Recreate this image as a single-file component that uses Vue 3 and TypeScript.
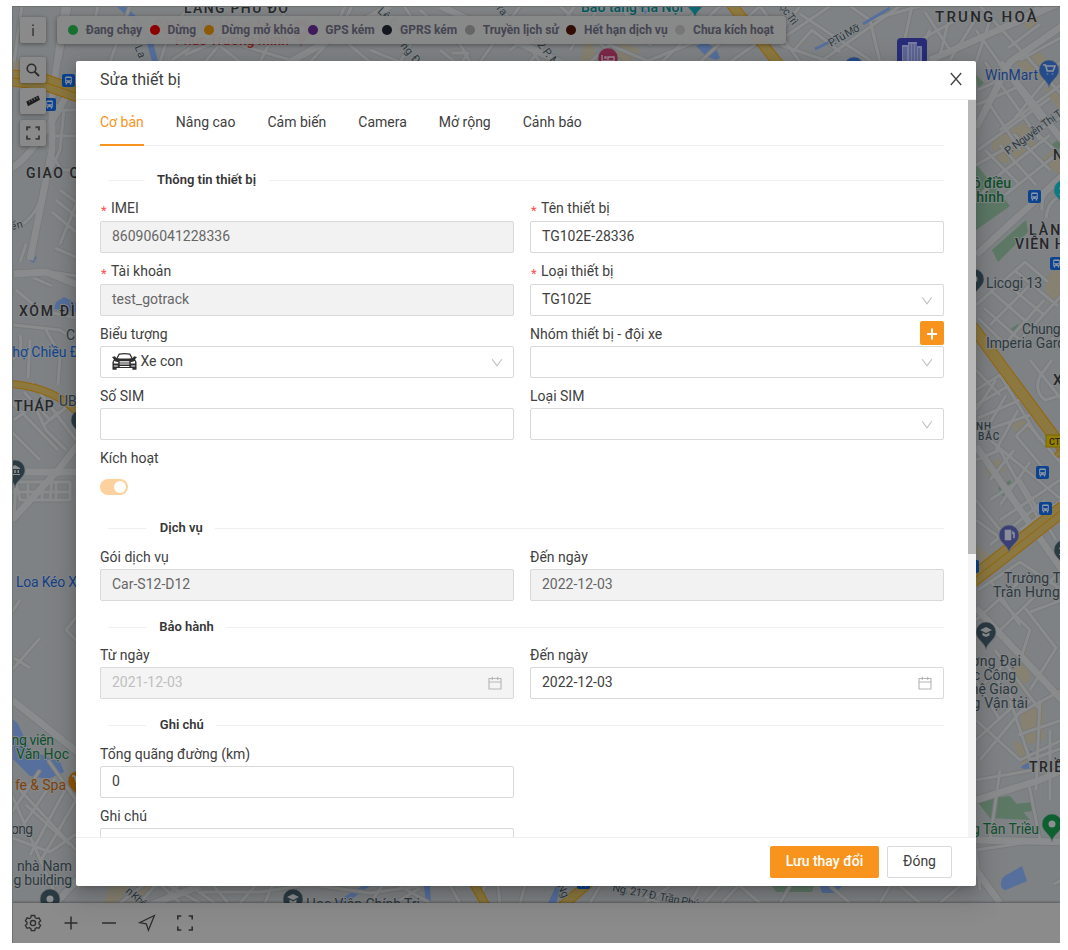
<script setup lang="ts">
interface MapLabel {
  t: string
  x: number
  y: number
  k?: string
  s?: number
  r?: number
  ls?: number
  w?: number
  f?: string
}
interface Field {
  label: string
  value?: string
  required?: boolean
  kind?: 'text' | 'select' | 'date' | 'switch' | 'none'
  state?: 'readonly' | 'disabled'
  icon?: boolean
  add?: boolean
}
interface Section {
  title: string
  loose?: boolean
  fields: Field[]
}

const legend = [
  { label: 'Đang chạy', color: '#17702f' },
  { label: 'Dừng', color: '#8c0000' },
  { label: 'Dừng mở khóa', color: '#8c5a04' },
  { label: 'GPS kém', color: '#3f1a5c' },
  { label: 'GPRS kém', color: '#12181d' },
  { label: 'Truyền lịch sử', color: '#666666' },
  { label: 'Hết hạn dịch vụ', color: '#320d04' },
  { label: 'Chưa kích hoạt', color: '#777777' },
]

const tabs = ['Cơ bản', 'Nâng cao', 'Cảm biến', 'Camera', 'Mở rộng', 'Cảnh báo']

const sections: Section[] = [
  {
    title: 'Thông tin thiết bị',
    fields: [
      { label: 'IMEI', value: '860906041228336', required: true, state: 'readonly' },
      { label: 'Tên thiết bị', value: 'TG102E-28336', required: true },
      { label: 'Tài khoản', value: 'test_gotrack', required: true, state: 'readonly' },
      { label: 'Loại thiết bị', value: 'TG102E', required: true, kind: 'select' },
      { label: 'Biểu tượng', value: 'Xe con', kind: 'select', icon: true },
      { label: 'Nhóm thiết bị - đội xe', kind: 'select', add: true },
      { label: 'Số SIM' },
      { label: 'Loại SIM', kind: 'select' },
      { label: 'Kích hoạt', kind: 'switch' },
    ],
  },
  {
    title: 'Dịch vụ',
    loose: true,
    fields: [
      { label: 'Gói dịch vụ', value: 'Car-S12-D12', state: 'readonly' },
      { label: 'Đến ngày', value: '2022-12-03', state: 'readonly' },
    ],
  },
  {
    title: 'Bảo hành',
    fields: [
      { label: 'Từ ngày', value: '2021-12-03', kind: 'date', state: 'disabled' },
      { label: 'Đến ngày', value: '2022-12-03', kind: 'date' },
    ],
  },
  {
    title: 'Ghi chú',
    loose: true,
    fields: [
      { label: 'Tổng quãng đường (km)', value: '0' },
      { label: '', kind: 'none' },
      { label: 'Ghi chú' },
    ],
  },
]

const wideRoads = [
  'M12 520 L60 468 L80 442', 'M12 472 H90', 'M66 0 L52 98 L52 150 L30 260',
  'M12 168 Q40 150 80 70', 'M14 274 L46 272 L90 290', 'M12 700 L90 762', 'M56 903 L92 864',
  'M290 62 L390 6', 'M440 6 L560 62', 'M976 255 L1062 176', 'M930 60 L1062 2',
  'M976 446 L1062 570', 'M976 128 L1010 62 L1062 26', 'M976 840 L1062 842', 'M976 608 L1062 700',
  'M976 800 L1040 780 L1062 770', 'M1000 62 L1062 140', 'M150 905 L200 886', 'M976 870 L1000 903',
]

const roads = [
  'M14 230 Q40 215 42 190 L60 150', 'M48 150 L62 170 H78', 'M60 190 L80 205', 'M56 200 L78 218', 'M52 212 L76 232',
  'M60 244 L78 200', 'M55 248 L78 258', 'M20 262 L26 244', 'M34 278 L52 286', 'M36 270 L78 276',
  'M16 290 L40 310 L76 318', 'M14 325 L60 330 L76 340', 'M20 335 Q24 350 12 360', 'M30 340 L28 378', 'M46 330 L60 355 L58 385',
  'M12 402 L58 450', 'M14 420 L34 405 L46 430 L66 450', 'M24 392 L50 420 L76 400', 'M12 432 L40 460', 'M32 382 L76 440',
  'M44 425 L58 412', 'M16 482 H70 V500 H20 Z', 'M28 484 V502', 'M42 482 V500', 'M56 482 V500', 'M16 482 L14 520', 'M12 492 H70',
  'M52 478 L50 500', 'M12 612 L20 600', 'M12 670 L40 638', 'M14 658 L30 668', 'M78 615 L66 630 L78 642',
  'M12 795 L60 905', 'M20 790 L76 850', 'M40 770 L12 812', 'M55 778 L20 830', 'M65 790 L30 855', 'M76 800 L40 862', 'M26 805 L70 845',
  'M48 760 L76 800', 'M12 838 L50 852 L76 834', 'M14 62 L22 6', 'M60 60 L70 6', 'M90 40 L98 6',
  'M56 104 L50 140', 'M60 110 H78', 'M50 136 H80', 'M64 110 L60 150',
  'M110 62 L130 6', 'M160 62 L170 30 L190 6', 'M185 55 L215 42 L240 62', 'M205 62 L220 44', 'M190 48 L172 60',
  'M240 45 L290 60', 'M260 62 L288 6', 'M310 62 L340 30 L352 6', 'M320 20 L370 62', 'M345 6 L330 40', 'M370 50 L400 62',
  'M400 62 L420 30 L404 6', 'M420 10 L460 44 L470 62', 'M455 62 L440 50', 'M452 53 H468 L462 62', 'M480 62 L520 6', 'M500 6 L540 62',
  'M510 50 L530 35 L560 30', 'M530 62 L575 6', 'M560 6 L620 62', 'M590 62 L610 45 L650 62', 'M600 6 L570 50', 'M620 6 L650 45 L700 10',
  'M645 62 L700 40', 'M662 62 L720 6', 'M700 62 L760 6', 'M730 62 L790 20', 'M760 6 L800 62', 'M800 6 L782 30',
  'M780 45 L830 62', 'M786 36 L830 6', 'M794 50 L812 30 L840 52', 'M800 14 L870 60', 'M820 62 L900 6', 'M870 20 L880 62', 'M850 6 L870 20 L920 6',
  'M912 6 L905 38', 'M930 30 L915 62', 'M925 12 L950 50', 'M940 55 L950 15', 'M950 60 L975 20', 'M920 40 L975 10',
  'M976 30 L1040 120', 'M980 6 L1062 95', 'M990 20 L976 62', 'M1000 30 L1040 6', 'M1008 48 L1040 24', 'M1020 60 L1060 38',
  'M978 90 L1008 76', 'M976 105 L1020 86', 'M985 62 L1040 140', 'M1000 130 L1062 84', 'M978 150 L1050 98', 'M1020 150 L990 105',
  'M1015 118 L1062 60', 'M976 165 L1060 118', 'M985 150 L1020 185', 'M1000 145 L1036 185', 'M1014 134 L1050 170', 'M1028 125 L1060 155',
  'M990 182 L1050 135', 'M1005 195 L1062 150', 'M976 200 L1000 175', 'M1042 210 Q1040 190 1062 185', 'M1046 218 Q1048 200 1062 196',
  'M976 305 L1025 262 L1048 282', 'M990 290 L1030 325', 'M1002 280 L1044 315', 'M1014 270 L1058 306', 'M984 308 L1020 340', 'M978 318 L1006 345',
  'M1020 340 L1062 295', 'M1004 345 L1044 300', 'M990 325 L1030 285', 'M1040 350 L1062 330', 'M1030 360 L1062 400', 'M1042 372 Q1032 390 1045 400 L1062 395',
  'M1052 360 L1040 376', 'M976 370 L1000 395', 'M976 390 L1000 375 L1040 440', 'M976 405 L1010 385', 'M978 418 L1020 400', 'M980 432 L1030 415',
  'M996 380 L976 410', 'M1006 395 L986 430', 'M1018 410 L996 450', 'M1016 436 L1028 424 L1060 462', 'M1016 436 L1050 476', 'M976 460 L1000 450 L1045 530',
  'M990 500 L1020 480 L1056 540', 'M990 545 L1045 500', 'M1000 520 L1060 480', 'M990 440 L1062 500', 'M1014 450 L990 480', 'M1030 462 L1000 505',
  'M976 520 L1010 545', 'M976 500 L1000 530', 'M1020 530 L1062 500', 'M978 590 L1020 562 L1062 590', 'M976 620 L1030 572', 'M990 640 L1062 570',
  'M1000 600 L1030 630 L1022 655', 'M1025 608 L1056 648 L1030 690', 'M990 580 L1020 625', 'M1030 612 L1062 600', 'M1010 660 L976 690',
  'M980 660 L1014 700', 'M995 650 L1040 710', 'M976 680 L1000 720', 'M1010 700 L1030 760', 'M1016 715 L1062 690', 'M1018 735 L1062 720',
  'M976 740 L1020 700', 'M980 760 L1030 700', 'M976 720 L1020 760 L1062 740', 'M1030 760 L1062 748', 'M1040 700 L1036 790', 'M1050 730 L1050 800',
  'M976 780 L1062 765', 'M1000 770 L990 840', 'M1028 780 L1040 840', 'M976 850 L1030 842', 'M980 890 L976 850', 'M1062 880 L1054 884',
  'M120 903 L150 880', 'M140 903 L160 880', 'M160 903 L180 884', 'M180 903 L160 884', 'M200 903 L170 886', 'M215 903 L190 886',
  'M228 903 L214 886', 'M200 892 H260 L300 886', 'M240 903 L255 886', 'M265 903 L272 886', 'M320 886 L370 893 L420 886', 'M370 903 L382 886',
  'M395 903 L420 888', 'M400 886 L430 903', 'M450 886 L460 903', 'M478 903 L485 886', 'M500 903 L498 886', 'M520 903 L525 886',
  'M590 903 L600 886', 'M620 886 L660 903', 'M645 903 L670 886', 'M690 903 L700 886', 'M705 903 L720 886', 'M722 903 L738 886', 'M740 886 L760 903',
  'M780 903 L790 886', 'M850 903 L830 886', 'M880 903 L890 886', 'M920 903 L900 886', 'M940 903 L960 886',
]

const highways = [
  { d: 'M12 78 L44 82 L90 98', w: 15 },
  { d: 'M12 384 Q56 388 80 415', w: 6 },
  { d: 'M972 326 L1064 450', w: 10 },
  { d: 'M972 580 L1064 508', w: 14 },
  { d: 'M728 0 L780 66', w: 9 },
  { d: 'M474 884 L486 906', w: 7 },
  { d: 'M560 908 L590 882', w: 8 },
  { d: 'M1056 456 L1064 448', w: 4 },
]

const water = [
  'M125 6 L138 18 L152 38 L158 61 L152 61 L146 40 L134 22 L116 6 Z',
  'M56 302 L64 297 L76 303 V312 L54 309 Z', 'M32 255 L37 257 L34 263 L30 261 Z',
  'M12 718 L18 724 L30 750 L60 762 L64 772 L48 779 L30 776 L12 758 Z',
  'M704 42 L716 48 L720 58 L716 60 L706 56 L696 46 Z',
  'M1001 882 Q1002 876 1010 873 L1022 866 L1027 881 L1006 890 Q1000 889 1001 882 Z', 'M1022 766 L1029 762 L1029 770 L1021 768 Z', 'M1030 751 h2 v4 h-2 Z',
  'M334 903 L362 886 H370 L346 903 Z', 'M424 886 H430 L431 903 H426 Z', 'M548 903 L556 886 H562 L556 903 Z', 'M820 886 H842 L836 893 H822 Z',
]
const parks = [
  'M976 164 L1010 206 L976 230 Z', 'M992 250 L1026 220 L1028 232 L998 262 Z', 'M976 75 L984 83 L978 88 Z',
  'M998 488 L1010 480 L1014 488 L1003 496 Z', 'M976 800 L1010 796 L1030 820 L990 818 Z', 'M1016 804 L1032 802 V811 L1017 813 Z',
  'M772 886 H814 L812 892 H776 Z', 'M1052 144 L1060 139 V160 L1054 152 Z', 'M1009 330 L1018 324 L1020 328 L1012 333 Z',
]
const blocks = [
  'M1012 60 L1030 45 L1056 66 L1040 82 Z', 'M1016 12 L1040 18 L1030 34 Z', 'M1044 90 L1060 82 V110 Z', 'M990 140 L1030 120 L1036 150 L1000 165 Z',
  'M1040 160 L1060 146 V176 Z', 'M1044 280 L1060 265 V295 L1048 303 Z', 'M1012 650 L1026 650 L1030 680 L1016 690 Z', 'M1020 705 L1044 700 L1044 740 L1022 745 Z',
  'M1012 740 L1030 748 L1024 770 Z', 'M110 886 H130 L118 903 H104 Z', 'M140 886 H152 L140 903 H130 Z', 'M588 30 L598 62 H580 Z', 'M620 40 L640 50 L630 62 H614 Z',
  'M976 545 L990 556 L980 572 Z', 'M1012 425 L1024 418 L1030 428 L1018 436 Z', 'M984 470 L998 458 L1006 470 L992 478 Z', 'M12 60 H22 V76 H12 Z',
  'M1030 515 L1050 500 L1056 510 L1036 525 Z',
]

const buses = [
  { x: 62, y: 74 }, { x: 43, y: 98 }, { x: 1028, y: 190 }, { x: 1050, y: 257 }, { x: 1036, y: 466 }, { x: 1039, y: 502 }, { x: 966, y: 560 }, { x: 577, y: 876 },
]

const pins = [
  { x: 1049, y: 70, c: '#254b88', g: 'cart' }, { x: 1009, y: 535, c: '#3b4176', g: 'pump' },
  { x: 986, y: 632, c: '#2b3b44', g: 'cap' }, { x: 1052, y: 824, c: '#0d6030', g: 'dot' },
  { x: 974, y: 279, c: '#2b3b44', g: 'dot' }, { x: 15, y: 470, c: '#2b3b44', g: 'bank' },
  { x: 81, y: 420, c: '#2b3b44', g: 'dot' }, { x: 78, y: 781, c: '#8e5607', g: 'cart' },
  { x: 50, y: 899, c: '#2b3b44', g: 'dot' }, { x: 293, y: 899, c: '#2b3b44', g: 'cap' },
  { x: 1064, y: 190, c: '#087b85', g: 'bank' }, { x: 1064, y: 550, c: '#2b3b44', g: 'bank' },
  { x: 854, y: 67, c: '#254b88', g: 'dot' }, { x: 608, y: 58, c: '#7d2748', g: 'bed' },
  { x: 695, y: 0, c: '#0b6870', g: 'dot' }, { x: 301, y: 29, c: '#814445', g: 'dot' },
]

const labels: MapLabel[] = [
  { t: 'LÀNG PHÚ ĐÔ', x: 184, y: 13, w: 105, k: 'area' },
  { t: 'Bệnh viện Hồng Ngọc', x: 154, y: 31, w: 136, f: '#8d3734' },
  { t: 'Phúc Trường Minh', x: 175, y: 45, w: 114, f: '#8a1f1c', k: 'mid' },
  { t: 'Bảo tàng Hà Nội', x: 581, y: 12, w: 102, f: '#03565c', k: 'mid' },
  { t: 'TRUNG HOÀ', x: 935, y: 22, w: 103, k: 'area', s: 15 },
  { t: 'WinMart', x: 985, y: 80, w: 53, f: '#173e7e' },
  { t: 'Vincom Center', x: 880, y: 70, w: 82, f: '#173e7e', k: 'mid', s: 13 },
  { t: 'P.Tú Mỡ', x: 831, y: 47, w: 34, r: -30, k: 'road' },
  { t: 'ọc Trì', x: 779, y: 7, w: 23, r: 54, k: 'road' },
  { t: 'P. Nguyễn Thị T', x: 1008, y: 155, w: 68, r: -36, k: 'road' },
  { t: 'Tố La', x: 128, y: 31, w: 30, r: 68, k: 'road' },
  { t: 'Lê Đức', x: 377, y: 12, w: 36, r: 42, k: 'road' },
  { t: 'ng Đ', x: 400, y: 46, w: 24, r: 50, k: 'road' },
  { t: '62 P. M', x: 533, y: 40, w: 35, r: 52, k: 'road' },
  { t: 'Tra', x: 492, y: 4, w: 16, r: 50, k: 'road' },
  { t: 'GIAO QUANG', x: 26, y: 178, w: 98, k: 'area' },
  { t: 'uyến', x: 0, y: 233, w: 24, r: -14, k: 'road' },
  { t: 'XÓM ĐÌNH', x: 19, y: 316, w: 80, k: 'area' },
  { t: 'Chợ', x: 66, y: 340 }, { t: 'chợ Chiều Đình', x: 5, y: 357, w: 93, f: '#0f458d' },
  { t: 'THÁP', x: 14, y: 411, w: 41, k: 'area' }, { t: 'UBND', x: 59, y: 406 },
  { t: 'Loa Kéo X', x: 16, y: 587, w: 61, f: '#143f86' },
  { t: 'Công viên', x: -5, y: 745, w: 59, f: '#0d502a' },
  { t: 'Văn Học', x: 16, y: 759, w: 53, f: '#0d502a' },
  { t: 'fe & Spa', x: 15, y: 790, w: 51, f: '#7e4209' },
  { t: 'ương', x: 3, y: 834, w: 30 }, { t: 'nhà Nam', x: 17, y: 871, w: 55 }, { t: 'ng building', x: 6, y: 885, w: 66 },
  { t: 'hồ điều', x: 965, y: 188, w: 46, f: '#0d502a', k: 'mid' },
  { t: 'Chính', x: 967, y: 202, w: 37, f: '#0d502a', k: 'mid' },
  { t: 'N', x: 1053, y: 160, k: 'area' }, { t: 'LÀNG', x: 1029, y: 235, w: 44, k: 'area' },
  { t: 'VIÊN HÒA', x: 1015, y: 249, w: 72, k: 'area' }, { t: 'Licogi 13', x: 986, y: 288, w: 56 },
  { t: 'Chung cư', x: 1022, y: 334, w: 57 }, { t: 'Imperia Garden', x: 986, y: 348, w: 94 },
  { t: 'X', x: 1053, y: 385, k: 'area', s: 15 }, { t: 'NH', x: 976, y: 430, s: 10, ls: 1, k: 'mid' }, { t: 'BẮC', x: 978, y: 440, s: 10, ls: 1, k: 'mid' },
  { t: 'Trường TH', x: 1004, y: 583, w: 67 }, { t: 'Trần Hưng Đ', x: 993, y: 597, w: 80 },
  { t: 'Trường Đại', x: 949, y: 666, w: 72 }, { t: 'học Công', x: 957, y: 680, w: 59 },
  { t: 'nghệ Giao', x: 955, y: 694, w: 63 }, { t: 'thông Vận tải', x: 944, y: 708, w: 84 },
  { t: 'TRIỀU', x: 1029, y: 772, w: 45, k: 'area' }, { t: 'g Tân Triều', x: 972, y: 834, w: 67, f: '#0d502a' },
  { t: 'n Khê', x: 125, y: 892, w: 24, r: 42, k: 'road' }, { t: 'Học Viện Chính Trị', x: 306, y: 909, w: 114 },
  { t: 'Ng. 217 Đ. Trần Phú', x: 612, y: 891, w: 88, r: 11, k: 'road' }, { t: 'Ng', x: 557, y: 886, r: 65, k: 'road' },
]
</script>

<template>
  <div class="screen">
    <svg class="map" viewBox="12 6 1048 897" width="1048" height="897">
      <defs>
        <symbol id="bus" viewBox="0 0 13 13">
          <rect width="13" height="13" rx="2" fill="#0c4391" />
          <path d="M3.2 3.6Q3.2 2.6 4.2 2.6H8.8Q9.8 2.6 9.8 3.6V9H3.2ZM3.8 9h1.4v1.4H3.8ZM7.8 9h1.4v1.4H7.8Z" fill="#8f9aa9" />
          <path d="M4.2 4H8.8V6.2H4.2ZM4.2 7.3h1.1v.9H4.2ZM7.7 7.3h1.1v.9H7.7Z" fill="#0c4391" />
        </symbol>
      </defs>
      <rect x="12" y="6" width="1048" height="897" fill="#7f8284" />
      <path v-for="d in blocks" :key="d" :d="d" fill="#868171" />
      <path v-for="d in parks" :key="d" :d="d" fill="#5d7966" />
      <path v-for="d in water" :key="d" :d="d" fill="#566f9d" />
      <g class="casing">
        <path v-for="d in roads" :key="d" :d="d" />
        <path v-for="d in wideRoads" :key="d" :d="d" class="wide" />
      </g>
      <g class="street">
        <path v-for="d in roads" :key="d" :d="d" />
        <path v-for="d in wideRoads" :key="d" :d="d" class="wide" />
      </g>
      <g v-for="h in highways" :key="h.d" fill="none">
        <path :d="h.d" stroke="#94650b" :stroke-width="h.w + 2" />
        <path :d="h.d" stroke="#8d793f" :stroke-width="h.w" />
        <path v-if="h.w > 12" :d="h.d" stroke="#94650b" stroke-width="1" />
      </g>
      <path d="M815 49 L840 37 M863 24 L890 8 M640 7 L646 13" stroke="#566f9d" stroke-width="3" />
      <g>
        <rect x="897" y="38" width="30" height="40" rx="4" fill="#292d78" />
        <path d="M902 61V45h6v16ZM908 61V42h9v19ZM917 61V46h5v15Z" fill="#777da2" />
        <path d="M904 47v14M906 47v14M910 44v17M913 44v17M916 44v17M919 48v13" stroke="#3a3f7c" stroke-width=".8" />
      </g>
      <rect x="1046" y="435" width="20" height="12" fill="#938000" stroke="#766600" />
      <text x="1049" y="444.500" class="shield">CT20</text>
      <use v-for="b in buses" :key="`${b.x}-${b.y}`" href="#bus" :x="b.x" :y="b.y" width="13" height="13" />
      <g v-for="p in pins" :key="`${p.x}-${p.y}`" :transform="`translate(${p.x} ${p.y})`">
        <path d="M0 18C-1 10 -10 8 -10 0A10 10 0 0 1 10 0C10 8 1 10 0 18Z" :fill="p.c" stroke="#737679" stroke-width=".6" />
        <circle v-if="p.g === 'dot'" r="3.500" fill="#8c8e8f" />
        <path v-else-if="p.g === 'cart'" d="M-6 -5h2.500l1.800 6H4L6 -4H-3M-1.500 3.500v1M3.500 3.500v1" fill="none" stroke="#8c939d" stroke-width="1.600" />
        <path v-else-if="p.g === 'cap'" d="M-6 -2L0 -5L6 -2L0 1ZM-3.500 .5V3.500L0 5L3.500 3.500V.5L0 2.500Z" fill="#8c8e8f" />
        <path v-else-if="p.g === 'pump'" d="M-4 5V-5H2V5ZM3 -1h1.500v4h1V-2L3.500 -4" fill="#8c8e9c" stroke="#8c8e9c" stroke-width=".6" />
        <path v-else-if="p.g === 'bank'" d="M-5 -2L0 -5L5 -2V-1H-5ZM-4 0h1.500v3H-4ZM-.8 0H.8v3H-.8ZM2.500 0H4v3H2.500ZM-5 4H5v1H-5Z" fill="#8c8e8f" />
        <path v-else d="M-6 -3V5M-6 3H6V-1H0V2M-3 -1h1v1h-1Z" fill="none" stroke="#9a8790" stroke-width="1.400" />
      </g>
      <text
        v-for="l in labels"
        :key="`${l.t}-${l.x}-${l.y}`"
        :x="l.x"
        :y="l.y"
        :class="['label', l.k]"
        :fill="l.f ?? (l.k === 'area' ? '#252729' : '#2e3a40')"
        :font-size="l.s ?? (l.k === 'road' ? 11 : 14)"
        :letter-spacing="l.ls ?? (l.k === 'area' ? 1.2 : 0)"
        :textLength="l.w"
        :transform="l.r ? `rotate(${l.r} ${l.x} ${l.y})` : undefined"
      >{{ l.t }}</text>
    </svg>

    <div class="tools">
      <button class="tool info" aria-label="Thông tin">
        <svg width="26" height="26" viewBox="0 0 26 26"><path d="M12.300 7.500h1.500v1.600h-1.500zM12.400 11h1.300v8h-1.300z" fill="#2c2c2c" /></svg>
      </button>
      <button class="tool search" aria-label="Tìm kiếm">
        <svg width="26" height="26" viewBox="0 0 26 26"><circle cx="11.500" cy="11.500" r="4.300" /><path d="M14.600 14.600L19 19" stroke-width="2" /></svg>
      </button>
      <button class="tool ruler" aria-label="Đo">
        <svg width="26" height="26" viewBox="0 0 26 26">
          <path d="M6.300 13.400L18.300 7.600L20 11.800L8 18.200Z" fill="#1c1c1c" stroke="none" />
          <path d="M9 12.500l.9 2M11.500 11.300l.9 2M14 10l.9 2M16.500 8.800l.9 2" stroke="#777" stroke-width=".9" />
        </svg>
      </button>
      <button class="tool full" aria-label="Toàn màn hình">
        <svg width="26" height="26" viewBox="0 0 26 26"><path d="M7 10.500V7.300H10.500M15.500 7.300H19V10.500M19 15.500V18.900H15.500M10.500 18.900H7V15.500" stroke-width="1.900" stroke="#3d3d3d" /></svg>
      </button>
    </div>

    <div class="legend">
      <template v-for="item in legend" :key="item.label">
        <i :style="{ background: item.color }"></i><span>{{ item.label }}</span>
      </template>
    </div>

    <footer class="dock">
      <svg viewBox="0 0 18 18">
        <path d="M7.300 1.500H10.700L11.200 3.700L12.700 4.600L14.900 3.900L16.600 6.900L15 8.400V9.900L16.600 11.400L14.900 14.300L12.700 13.600L11.200 14.500L10.700 16.700H7.300L6.800 14.500L5.300 13.600L3.100 14.300L1.400 11.400L3 9.900V8.400L1.400 6.900L3.100 3.900L5.300 4.600L6.800 3.700Z" />
        <circle cx="9" cy="9.100" r="2.600" />
      </svg>
      <svg viewBox="0 0 18 18"><path d="M9 2.500V15.500M2.500 9H15.500" stroke-width="1.500" /></svg>
      <svg viewBox="0 0 18 18"><path d="M2 9H16" stroke-width="1.500" /></svg>
      <svg viewBox="0 0 18 18"><path d="M16.400 1.500L10.400 16.200L8.300 9.800L1.600 8.600Z" /></svg>
      <svg viewBox="0 0 18 18"><path d="M1.800 5.500V2H5.300M12.700 2H16.200V5.500M16.200 12.500V16H12.700M5.300 16H1.800V12.500" stroke-width="1.600" /></svg>
    </footer>

    <div class="overlay">
      <section class="dialog">
        <header class="dialog-head">
          <h1>Sửa thiết bị</h1>
          <svg width="12" height="14" viewBox="0 0 12 14"><path d="M.8 1L11.200 13M11.200 1L.8 13" stroke="#444" stroke-width="1.300" /></svg>
        </header>
        <div class="dialog-body">
          <div class="content">
            <nav class="tabs">
              <a v-for="(tab, i) in tabs" :key="tab" :class="{ active: i === 0 }">{{ tab }}</a>
            </nav>
            <div v-for="section in sections" :key="section.title">
              <h2 class="divider" :class="{ loose: section.loose }"><span>{{ section.title }}</span></h2>
              <div class="grid">
                <div v-for="(field, i) in section.fields" :key="i" class="field" :class="{ required: field.required }">
                  <template v-if="field.kind !== 'none'">
                    <label><b v-if="field.required">*</b>{{ field.label }}</label>
                    <button v-if="field.add" class="add" aria-label="Thêm">
                      <svg width="10" height="12" viewBox="0 0 10 12"><path d="M5 .5V11.500M0 6H10" stroke="#fff" stroke-width="2" /></svg>
                    </button>
                    <div v-if="field.kind === 'switch'" class="switch"></div>
                    <div v-else class="input" :class="field.state">
                      <svg v-if="field.icon" class="car" width="25" height="18" viewBox="0 0 26 18" preserveAspectRatio="none">
                        <path d="M5 5.500L7.500 1.200Q13 .2 18.500 1.200L21 5.500" fill="none" stroke="#2f2f2f" stroke-width="1.300" />
                        <path d="M0 4L3 3.300L4.500 5L8.500 5.500H17.500L21.500 5L23 3.300L26 4L24 6.200L25.500 9V16.800H21.200V15H4.800V16.800H.5V9L2 6.200Z" fill="#2f2f2f" />
                        <path d="M2 8L6.500 9.300V10.500H2ZM24 8L19.500 9.300V10.500H24ZM8 8.200H18V9.400H8ZM8 10.600H18V11.600H8ZM2 12.500H6V13.600H2ZM20 12.500H24V13.600H20ZM8 13H18V13.900H8Z" fill="#fff" />
                      </svg>
                      <span>{{ field.value }}</span>
                      <svg v-if="field.kind === 'select'" class="arrow" width="12" height="10" viewBox="0 0 12 10"><path d="M1.200 1.200L6 7.800L10.800 1.200" /></svg>
                      <svg v-if="field.kind === 'date'" class="arrow date" width="14" height="14" viewBox="0 0 14 14"><path d="M1 2.500H13V13H1ZM1 6H13M4.300 .7V4M9.700 .7V4" /></svg>
                    </div>
                  </template>
                </div>
              </div>
            </div>
          </div>
          <div class="scrollbar"><div class="thumb"></div></div>
        </div>
        <footer class="dialog-foot">
          <button class="btn primary">Lưu thay đổi</button>
          <button class="btn">Đóng</button>
        </footer>
      </section>
    </div>
  </div>
</template>

<style>
body {
  background: #fff;
}
</style>

<style scoped>
* {
  box-sizing: border-box;
}
.screen {
  position: relative;
  width: 1048px;
  height: 937px;
  margin: 6px 0 0 12px;
  overflow: hidden;
  display: flex;
  flex-direction: column;
  background: #8b8b8b;
  font-family: Roboto, 'Liberation Sans', sans-serif;
  font-size: 14px;
  color: #404040;
}
.screen::after {
  content: '';
  position: absolute;
  inset: 0;
  border-top: 1px solid #6f7171;
  border-left: 1px solid #6f7171;
  pointer-events: none;
}
button {
  font: inherit;
  padding: 0;
}
.map {
  display: block;
  flex: none;
}
.casing path,
.street path {
  fill: none;
  stroke-linejoin: round;
}
.casing path {
  stroke: #777a7b;
  stroke-width: 4.800;
}
.street path {
  stroke: #898b8c;
  stroke-width: 3;
}
.casing .wide {
  stroke-width: 8.500;
}
.street .wide {
  stroke-width: 6.800;
}
.label {
  paint-order: stroke;
  stroke: #85878a;
  stroke-width: 2px;
  stroke-linejoin: round;
}
.area,
.mid {
  font-weight: 500;
}
.shield {
  font-size: 9px;
  font-weight: 500;
  fill: #2a2700;
}
.tools {
  position: absolute;
  left: 8px;
  top: 11px;
  display: flex;
  flex-direction: column;
}
.tool {
  width: 26px;
  height: 26px;
  border: 0;
  border-radius: 2px;
  background: #8a8a8a;
  box-shadow: 0 1px 4px rgba(0, 0, 0, 0.4);
}
.tool svg {
  display: block;
  fill: none;
  stroke: #2c2c2c;
  stroke-width: 1.600;
}
.info svg {
  stroke: none;
}
.search {
  margin-top: 14px;
}
.ruler {
  margin-top: 5px;
}
.full {
  margin-top: 6px;
}
.legend {
  position: absolute;
  left: 45px;
  top: 10px;
  width: 729px;
  height: 28px;
  padding: 0 12px 1px 11px;
  display: flex;
  align-items: center;
  justify-content: space-between;
  white-space: nowrap;
  border-radius: 4px;
  background: rgba(137, 137, 137, 0.94);
  box-shadow: 0 1px 5px rgba(0, 0, 0, 0.4);
  font-size: 12px;
  font-weight: 700;
  color: #454552;
}
.legend i {
  width: 10px;
  height: 10px;
  flex: none;
  margin-top: 1px;
  border-radius: 50%;
}
.dock {
  position: relative;
  height: 40px;
  flex: none;
  padding: 0 12px;
  display: flex;
  align-items: center;
  gap: 20px;
  background: #8b8b8b;
  box-shadow: 0 -1px 2px rgba(0, 0, 0, 0.3);
}
.dock svg {
  width: 18px;
  height: 18px;
  fill: none;
  stroke: #2e2e2e;
  stroke-width: 1.300;
}
.overlay {
  position: absolute;
  inset: 0;
  padding-top: 55px;
  display: flex;
  justify-content: center;
  align-items: flex-start;
  padding-right: 20px;
}
.dialog {
  width: 900px;
  height: 825px;
  display: flex;
  flex-direction: column;
  background: #fff;
  border-radius: 2px;
  box-shadow: 0 3px 6px -4px rgba(0, 0, 0, 0.3), 0 6px 16px rgba(0, 0, 0, 0.16), 0 9px 28px 8px rgba(0, 0, 0, 0.1);
}
.dialog-head {
  height: 39px;
  flex: none;
  padding: 0 14px 2px 24px;
  display: flex;
  align-items: center;
  justify-content: space-between;
  border-bottom: 1px solid #efefef;
}
h1 {
  margin: 2px 0 0;
  font-size: 16px;
  line-height: 22px;
  font-weight: 400;
  color: #404040;
}
.dialog-body {
  height: 737px;
  display: flex;
  overflow: hidden;
}
.content {
  flex: 1;
  padding: 0 24px;
}
.scrollbar {
  width: 8px;
  background: #f4f4f4;
}
.thumb {
  height: 454px;
  background: #b7b7b7;
}
.tabs {
  height: 46px;
  display: flex;
  gap: 32px;
  border-bottom: 1px solid #efefef;
  margin-bottom: 24px;
}
.tabs a {
  height: 46px;
  line-height: 22px;
  padding-top: 11px;
}
.tabs .active {
  color: #f8941d;
  border-bottom: 2px solid #f8941d;
}
.divider {
  display: flex;
  align-items: center;
  height: 20px;
  margin: 16px 0 7px 8px;
  font-size: 13px;
  font-weight: 600;
  line-height: 20px;
  white-space: nowrap;
  color: #363636;
}
.divider::before,
.divider::after {
  content: '';
  width: 5%;
  height: 1px;
  margin-top: 1px;
  background: #f0f0f0;
}
.divider::after {
  width: 95%;
}
.divider span {
  flex: none;
  padding: 0 12.500px 0 13.500px;
}
.divider.loose {
  margin-bottom: 8px;
}
.grid {
  display: grid;
  grid-template-columns: 1fr 1fr;
  gap: 7px 16px;
}
.field {
  position: relative;
}
.field label {
  display: block;
  height: 23px;
  line-height: 22px;
}
.required label {
  height: 24px;
}
.field b {
  display: inline-block;
  width: 11px;
  height: 14px;
  line-height: 18px;
  font-size: 13px;
  color: #ff4d4f;
  font-weight: 400;
  padding-left: 1px;
  vertical-align: -2px;
}
.input {
  height: 32px;
  border: 1px solid #d9d9d9;
  border-radius: 2px;
  padding: 0 11px 2px;
  display: flex;
  align-items: center;
  color: #404040;
}
.input.readonly {
  background: #f2f2f2;
  color: #666;
}
.input.disabled {
  background: #f4f4f4;
  color: #bfbfbf;
}
.car {
  margin-right: 3.500px;
  margin-top: 2px;
}
.arrow {
  margin-left: auto;
  margin-right: -1px;
  margin-top: 3px;
  fill: none;
  stroke: #bfbfbf;
  stroke-width: 1.100;
}
.date {
  margin-right: 0;
  margin-top: 1px;
  stroke: #b5b5b5;
}
.add {
  position: absolute;
  right: 0;
  top: -2px;
  width: 24px;
  height: 24px;
  border: 0;
  border-radius: 2px;
  display: grid;
  place-items: center;
  padding-top: 2px;
  background: #f8941d;
}
.switch {
  width: 28px;
  height: 16px;
  margin: 9px 0 7px;
  border-radius: 8px;
  padding: 2px;
  background: #fcd19e;
  display: flex;
  justify-content: flex-end;
}
.switch::after {
  content: '';
  width: 12px;
  height: 12px;
  border-radius: 50%;
  background: #fff;
}
.dialog-foot {
  height: 49px;
  flex: none;
  border-top: 1px solid #efefef;
  padding: 8px 24px;
  display: flex;
  justify-content: flex-end;
  gap: 8px;
}
.btn {
  height: 32px;
  width: 65px;
  padding-bottom: 2px;
  border: 1px solid #d9d9d9;
  border-radius: 2px;
  background: #fff;
  color: #404040;
}
.btn.primary {
  width: 109px;
  border-color: #f8941d;
  background: #f8941d;
  color: #fff;
  font-weight: 500;
}
</style>
